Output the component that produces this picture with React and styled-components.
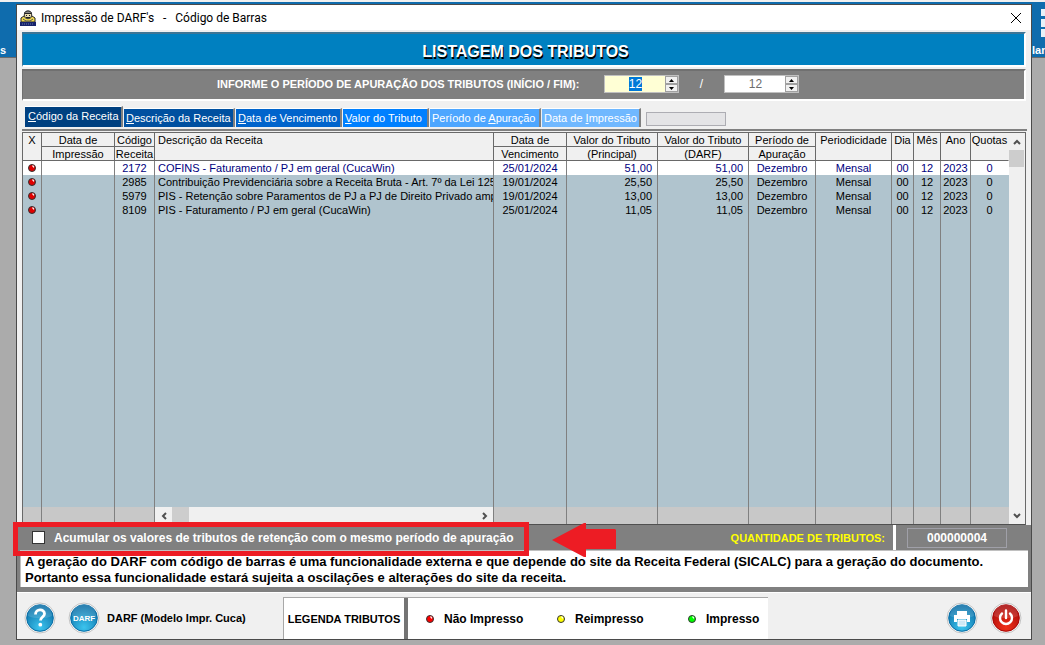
import React, { useEffect, useRef, useState } from 'react';
import styled, { createGlobalStyle } from 'styled-components';

const colors = {
	face: '#f0f0f0',
	shade: '#808080',
	grid: '#b0c4ce',
	line: '#696969',
	banner: '#0080c0',
	app: '#0f6cad',
	red: '#ed1c24',
};

const sans = '"Liberation Sans", Arial, sans-serif';

const GlobalStyle = createGlobalStyle`
	* {
		box-sizing: border-box;
	}
	body {
		margin: 0;
		background: #ababab;
		font: 11px ${sans};
		color: #000;
	}
	button, input {
		font: inherit;
		color: inherit;
		padding: 0;
		margin: 0;
		border: 0;
		border-radius: 0;
		background: none;
	}
`;

const Desktop = styled.div`
	position: relative;
	display: flex;
	min-height: 100vh;
	padding: 4px 13px 5px 16px;
	overflow: hidden;
`;

const AppBar = styled.div`
	position: absolute;
	top: 0;
	left: 0;
	right: 0;
	height: 58px;
	display: flex;
	justify-content: space-between;
	align-items: flex-end;
	border-top: 2px solid ${colors.face};
	border-bottom: 1px solid #6b6b6b;
	background: ${colors.app};
	color: #fff;
	font-weight: bold;
`;

const AppItem = styled.div`
	display: flex;
	flex-direction: column;
	width: 13px;
	line-height: 13px;

	svg {
		display: block;
		align-self: flex-end;
		margin-bottom: 7px;
	}
`;

const Window = styled.main`
	position: relative;
	flex: 1;
	min-width: 0;
	display: flex;
	flex-direction: column;
	border: 1px solid #4a4a4a;
	background: ${colors.face};
`;

const TitleBar = styled.header`
	display: flex;
	align-items: center;
	gap: 5px;
	height: 25px;
	padding: 0 9px 0 3px;
	background: #fff;
	font: 12px Roboto, 'Open Sans', sans-serif;
`;

const Title = styled.span`
	flex: 1;
	white-space: pre;
`;

const CloseButton = styled.button`
	display: flex;
`;

const Banner = styled.h1`
	margin: 2px 5px 0;
	height: 35px;
	padding-left: 4px;
	line-height: 35px;
	border: 2px solid #fff;
	border-top: 2px solid #3d7595;
	border-left: 1px solid #3d7595;
	background: ${colors.banner};
	color: #fff;
	font-size: 16px;
	font-weight: bold;
	text-align: center;
	text-shadow: 1px 2px 0 #000;
`;

const PeriodBar = styled.div`
	display: flex;
	align-items: center;
	margin: 2px 5px 0;
	height: 32px;
	padding: 0 0 2px 194px;
	border: 2px solid #fff;
	border-top: 2px solid #707070;
	border-left: 1px solid #707070;
	background: ${colors.shade};
	color: #fff;
	font-size: 12px;
`;

const PeriodLabel = styled.span`
	width: 387px;
	font-size: 11px;
	font-weight: bold;
	white-space: nowrap;
`;

const Slash = styled.span`
	width: 45px;
	text-align: center;
`;

const SpinBox = styled.span`
	display: flex;
	width: 75px;
	height: 18px;
	border: 1px solid #c0c0c0;
	background: ${props => (props.$active ? '#ffffd5' : '#fff')};
	color: ${props => (props.$active ? '#000' : '#6d6d6d')};

	input {
		flex: 1;
		min-width: 0;
		padding-left: 1px;
		text-align: center;
		outline: none;
	}
	input::selection {
		background: #0078d7;
		color: #fff;
	}
`;

const Spinner = styled.span`
	display: flex;
	flex-direction: column;
	width: 13px;

	button {
		flex: 1;
		display: flex;
		align-items: center;
		justify-content: center;
		border: 1px solid #a0a0a0;
		background: ${colors.face};
	}
`;

const Tabs = styled.div`
	display: flex;
	align-items: flex-end;
	gap: 2px;
	height: 30px;
	margin: 0 4px 0 5px;
	padding: 0 0 2px 3px;
	border-bottom: 2px solid ${colors.shade};
`;

const Tab = styled.button`
	width: ${props => props.$width}px;
	height: ${props => (props.$selected ? 21 : 19)}px;
	margin-left: ${props => (props.$selected ? 0 : -1)}px;
	padding: 0 0 ${props => (props.$selected ? 2 : 0)}px ${props => (props.$selected ? 3 : 2)}px;
	border-top: 1px solid #fff;
	border-right: 2px solid ${colors.shade};
	background: ${props => props.$shade};
	color: #fff;
	white-space: nowrap;
	text-align: left;
`;

const SearchInput = styled.input`
	width: 80px;
	height: 14px;
	margin-left: 3px;
	margin-bottom: 1px;
	border: 1px solid #adadb3;
	background: #e4e4e6;
`;

const GridFrame = styled.div`
	flex: 1;
	display: flex;
	margin: 1px 5px 0;
	border: 1px solid ${colors.line};
	border-bottom-color: #505050;
`;

const Table = styled.table`
	flex: 1;
	width: 100%;
	min-width: 0;
	table-layout: fixed;
	border-spacing: 0;
	background: ${colors.grid};
	line-height: 14px;
`;

const HeadCell = styled.th`
	height: 28px;
	padding: 0;
	vertical-align: top;
	border-right: 1px solid ${props => (props.$last ? colors.face : colors.line)};
	border-bottom: 1px solid ${colors.line};
	background: ${colors.face};
	font-weight: normal;
	text-align: ${props => props.$align || 'center'};
	white-space: nowrap;

	span {
		display: block;
		height: 13px;
		line-height: 14px;
		padding: 0 ${props => (props.$align ? 3 : 0)}px;
	}
	span + span {
		height: 14px;
		border-top: 1px solid ${colors.line};
	}
`;

const Row = styled.tr`
	height: 14px;
	background: ${props => (props.$selected ? '#fff' : 'transparent')};
	color: ${props => (props.$selected ? '#000080' : '#000')};
`;

const Cell = styled.td`
	padding: 0 ${props => (props.$align === 'right' ? 5 : 0)}px 0 ${props => (props.$align === 'left' ? 3 : 0)}px;
	border-right: 1px solid ${props => (props.$last ? 'transparent' : colors.shade)};
	text-align: ${props => props.$align || 'center'};
	white-space: nowrap;
	overflow: hidden;

	svg {
		display: block;
		margin: 0 auto;
	}
`;

const FootRow = styled.tr`
	height: 17px;
	background: #c8c8c8;
`;

const ScrollBar = styled.div`
	display: flex;
	flex-direction: ${props => (props.$vertical ? 'column' : 'row')};
	flex-shrink: 0;
	width: ${props => (props.$vertical ? '16px' : 'auto')};
	height: ${props => (props.$vertical ? 'auto' : '17px')};
	background: ${colors.face};

	button {
		display: flex;
		align-items: center;
		justify-content: center;
		width: ${props => (props.$vertical ? 15 : 17)}px;
		height: 17px;
	}
	button:last-child {
		margin-left: ${props => (props.$vertical ? '0' : 'auto')};
		margin-top: ${props => (props.$vertical ? 'auto' : '0')};
	}
`;

const Thumb = styled.span`
	width: ${props => (props.$vertical ? 15 : 17)}px;
	height: 17px;
	background: #cdcdcd;
`;

const SummaryBar = styled.div`
	position: relative;
	display: flex;
	align-items: center;
	height: 25px;
	padding: 0 24px 0 15px;
	background: ${colors.shade};
	color: #fff;
	font-weight: bold;
`;

const CheckLabel = styled.label`
	display: flex;
	align-items: center;
	gap: 9px;
	flex: 1;
	white-space: nowrap;
	font-size: 12px;

	input {
		appearance: none;
		width: 13px;
		height: 13px;
		border: 1px solid #333;
		background: #fff;
	}
	input:checked {
		background: #333;
	}
`;

const CountLabel = styled.span`
	padding-right: 8px;
	color: #ffff00;
`;

const CountBox = styled.div`
	align-self: stretch;
	display: flex;
	align-items: center;
	padding-left: 11px;
	border-left: 3px solid #fff;
`;

const Count = styled.output`
	width: 100px;
	height: 20px;
	line-height: 18px;
	border: 1px solid #a0a0a8;
	text-align: center;
	font-size: 12px;
`;

const Highlight = styled.div`
	position: absolute;
	z-index: 1;
	left: -4px;
	top: -3px;
	width: 516px;
	height: 34px;
	border: 5px solid ${colors.red};
	pointer-events: none;
`;

const Arrow = styled.svg`
	position: absolute;
	z-index: 1;
	left: 535px;
	top: -3px;
`;

const Notice = styled.p`
	margin: 0;
	height: 42px;
	padding: 4px 0 0 5px;
	border: solid ${colors.shade};
	border-width: 0 3px 5px 3px;
	background: #fff;
	box-shadow: inset 1px 1px 0 #c0c0c0;
	font-size: 13px;
	font-weight: bold;
	line-height: 16px;
	white-space: nowrap;
	overflow: hidden;
`;

const Footer = styled.footer`
	display: flex;
	align-items: center;
	height: 47px;
	padding: 4px 9px 0 7px;
	border-top: 1px solid #fff;
	font-weight: bold;
`;

const RoundButton = styled.button`
	display: flex;
	width: 32px;
	height: 32px;
	margin-right: ${props => props.$gap || 0}px;
`;

const ModelLabel = styled.span`
	width: 176px;
	white-space: nowrap;
`;

const Legend = styled.div`
	display: flex;
	align-items: center;
	align-self: stretch;
	width: 485px;
	margin-right: auto;
	border-top: 1px solid #a8a8a8;
	border-left: 1px solid #a8a8a8;
	background: #fff;
`;

const LegendTitle = styled.span`
	align-self: stretch;
	flex-shrink: 0;
	display: flex;
	align-items: center;
	justify-content: center;
	width: 124px;
	border-right: 4px solid #747474;
	white-space: nowrap;
`;

const LegendItem = styled.span`
	flex: 0 0 131px;
	display: flex;
	align-items: center;
	gap: 10px;
	padding-left: 18px;
	white-space: nowrap;
	font-size: 12px;

	&:last-child {
		flex-basis: auto;
	}
`;

const columns = [
	{ key: 'mark', head: ['X'], width: 19 },
	{ key: 'printed', head: ['Data de', 'Impressão'], width: 73 },
	{ key: 'code', head: ['Código', 'Receita'], width: 40 },
	{ key: 'description', head: ['Descrição da Receita'], align: 'left' },
	{ key: 'due', head: ['Data de', 'Vencimento'], width: 73 },
	{ key: 'value', head: ['Valor do Tributo', '(Principal)'], width: 91, cellAlign: 'right' },
	{ key: 'darf', head: ['Valor do Tributo', '(DARF)'], width: 91, cellAlign: 'right' },
	{ key: 'period', head: ['Período de', 'Apuração'], width: 67 },
	{ key: 'frequency', head: ['Periodicidade'], width: 76 },
	{ key: 'day', head: ['Dia'], width: 22 },
	{ key: 'month', head: ['Mês'], width: 27 },
	{ key: 'year', head: ['Ano'], width: 30 },
	{ key: 'quotas', head: ['Quotas'], width: 38 },
];

const common = { period: 'Dezembro', frequency: 'Mensal', day: '00', month: '12', year: '2023', quotas: '0' };

const taxes = [
	{ ...common, code: '2172', description: 'COFINS - Faturamento / PJ em geral (CucaWin)', due: '25/01/2024', value: '51,00', darf: '51,00' },
	{ ...common, code: '2985', description: 'Contribuição Previdenciária sobre a Receita Bruta - Art. 7º da Lei 1254', due: '19/01/2024', value: '25,50', darf: '25,50' },
	{ ...common, code: '5979', description: 'PIS - Retenção sobre Paramentos de PJ a PJ de Direito Privado ampara', due: '19/01/2024', value: '13,00', darf: '13,00' },
	{ ...common, code: '8109', description: 'PIS - Faturamento / PJ em geral (CucaWin)', due: '25/01/2024', value: '11,05', darf: '11,05' },
];

const tabs = [
	{ text: ['', 'C', 'ódigo da Receita'], width: 98, shade: '#004080' },
	{ text: ['', 'D', 'escrição da Receita'], width: 111, shade: '#0050a0' },
	{ text: ['', 'D', 'ata de Vencimento'], width: 106, shade: '#0064cc' },
	{ text: ['', 'V', 'alor do Tributo'], width: 86, shade: '#0080ff' },
	{ text: ['Período de ', 'A', 'puração'], width: 111, shade: '#4da6ff' },
	{ text: ['Data de ', 'I', 'mpressão'], width: 99, shade: '#70b8ff' },
];

const chevrons = {
	left: 'M6 1 3 4l3 3',
	right: 'M2 1l3 3-3 3',
	up: 'M1 6l3-3 3 3',
	down: 'M1 2l3 3 3-3',
};

const Chevron = ({ dir }) => (
	<svg width="8" height="8" viewBox="0 0 8 8">
		<path d={chevrons[dir]} fill="none" stroke="#505050" strokeWidth="2" />
	</svg>
);

const Dot = ({ color }) => (
	<svg width="8" height="8" viewBox="0 0 8 8">
		<circle cx="4" cy="4" r="3.5" fill={color} stroke="#333" strokeWidth="1" />
		<path d="M4 2h1.6v1.6" fill="none" stroke="#fff" strokeWidth="1" />
	</svg>
);

const AppIcon = () => (
	<svg width="16" height="16" viewBox="0 0 16 16">
		<path d="M1 8 4 6h8l3 2v4H1z" fill="#f2dc4e" stroke="#222" strokeWidth="1" />
		<circle cx="8" cy="5" r="3.8" fill="#e9dcae" stroke="#333" strokeWidth="1" />
		<path d="M4.5 3.5C5 0 11 0 11.5 3.5z" fill="#8a8a8a" stroke="#222" />
		<path d="M6 5.5h1M9 5.5h1M6 7.5h4" stroke="#222" />
		<path d="M3 9l3 2h4l3-2" fill="none" stroke="#555" />
		<path d="M0 12h16v4H0z" fill="#17236b" />
		<path d="M2 14h12" stroke="#6b78a8" strokeDasharray="1 1" />
	</svg>
);

const Orb = ({ id, light, dark, children }) => (
	<svg width="32" height="32" viewBox="0 0 32 32">
		<defs>
			<radialGradient id={id} cx="50%" cy="85%" r="80%">
				<stop offset="0" stopColor={light} />
				<stop offset="1" stopColor={dark} />
			</radialGradient>
		</defs>
		<circle cx="16" cy="16" r="15" fill="#f8f8f8" stroke="#c4c4c4" />
		<circle cx="16" cy="16" r="13.3" fill={`url(#${id})`} stroke={dark} />
		<path d="M4 14a12 12 0 0 1 24 0c-6 3-18 3-24 0z" fill="#fff" opacity=".14" />
		{children}
	</svg>
);

const PeriodSpin = React.forwardRef(({ label, active }, ref) => (
	<SpinBox $active={active}>
		<input ref={ref} aria-label={label} defaultValue="12" inputMode="numeric" />
		<Spinner>
			<button aria-label={`${label}: aumentar`}>
				<svg width="5" height="3"><path d="M0 3h5L2.5 0z" /></svg>
			</button>
			<button aria-label={`${label}: diminuir`}>
				<svg width="5" height="3"><path d="M0 0h5L2.5 3z" /></svg>
			</button>
		</Spinner>
	</SpinBox>
));

const TaxTable = () => (
	<GridFrame>
		<Table>
			<colgroup>
				{columns.map(col => (
					<col key={col.key} width={col.width} />
				))}
			</colgroup>
			<thead>
				<tr>
					{columns.map(col => (
						<HeadCell key={col.key} $align={col.align} $last={col.key === 'quotas'}>
							{col.head.map(line => (
								<span key={line}>{line}</span>
							))}
						</HeadCell>
					))}
				</tr>
			</thead>
			<tbody>
				{taxes.map((tax, i) => (
					<Row key={tax.code} $selected={i === 0}>
						{columns.map(col => (
							<Cell
								key={col.key}
								$align={col.cellAlign || col.align}
								$last={col.key === 'quotas'}
							>
								{col.key === 'mark' ? <Dot color="#e00000" /> : tax[col.key]}
							</Cell>
						))}
					</Row>
				))}
				<tr>
					{columns.map(col => (
						<Cell key={col.key} $last={col.key === 'quotas'} />
					))}
				</tr>
			</tbody>
			<tfoot>
				<FootRow>
					{columns.map(col => (
						<Cell key={col.key} $last={col.key === 'quotas'}>
							{col.key === 'description' && (
								<ScrollBar>
									<button aria-label="Rolar para a esquerda"><Chevron dir="left" /></button>
									<Thumb />
									<button aria-label="Rolar para a direita"><Chevron dir="right" /></button>
								</ScrollBar>
							)}
						</Cell>
					))}
				</FootRow>
			</tfoot>
		</Table>
		<ScrollBar $vertical>
			<button aria-label="Rolar para cima"><Chevron dir="up" /></button>
			<Thumb $vertical />
			<button aria-label="Rolar para baixo"><Chevron dir="down" /></button>
		</ScrollBar>
	</GridFrame>
);

const App = () => {
	const start = useRef(null);
	const [tab, setTab] = useState(0);

	useEffect(() => {
		start.current.focus();
		start.current.select();
	}, []);

	return (
		<Desktop>
			<GlobalStyle />
			<AppBar>
				<AppItem>
					<span>s</span>
				</AppItem>
				<AppItem>
					<svg width="4" height="28" viewBox="0 0 4 28">
						<path d="M0 0h4v7H0zM0 10h4v8H0zM0 20h4v8H0z" fill="#e8f1f8" />
					</svg>
					<span>lan</span>
				</AppItem>
			</AppBar>
			<Window>
				<TitleBar>
					<AppIcon />
					<Title>{"Impressão de DARF's   -   Código de Barras"}</Title>
					<CloseButton aria-label="Fechar">
						<svg width="12" height="12" viewBox="0 0 12 12">
							<path d="M1 1l10 10M11 1 1 11" stroke="#000" />
						</svg>
					</CloseButton>
				</TitleBar>
				<Banner>LISTAGEM DOS TRIBUTOS</Banner>
				<PeriodBar>
					<PeriodLabel>INFORME O PERÍODO DE APURAÇÃO DOS TRIBUTOS (INÍCIO / FIM):</PeriodLabel>
					<PeriodSpin ref={start} label="Início" active />
					<Slash>/</Slash>
					<PeriodSpin label="Fim" />
				</PeriodBar>
				<Tabs role="tablist">
					{tabs.map((item, i) => (
						<Tab
							key={item.shade}
							role="tab"
							aria-selected={tab === i}
							$selected={tab === i}
							$width={item.width}
							$shade={item.shade}
							onClick={() => setTab(i)}
						>
							{item.text[0]}
							<u>{item.text[1]}</u>
							{item.text[2]}
						</Tab>
					))}
					<SearchInput aria-label="Pesquisar" disabled />
				</Tabs>
				<TaxTable />
				<SummaryBar>
					<CheckLabel>
						<input type="checkbox" />
						Acumular os valores de tributos de retenção com o mesmo período de apuração
					</CheckLabel>
					<CountLabel>QUANTIDADE DE TRIBUTOS:</CountLabel>
					<CountBox>
						<Count>000000004</Count>
					</CountBox>
					<Highlight />
					<Arrow width="65" height="36" viewBox="0 0 65 36">
						<path d="M0 18 32 1h2v6h29l1 1v19H34v8h-2z" fill={colors.red} />
					</Arrow>
				</SummaryBar>
				<Notice>
					A geração do DARF com código de barras é uma funcionalidade externa e que depende do site da Receita Federal (SICALC) para a geração do documento.
					<br />
					Portanto essa funcionalidade estará sujeita a oscilações e alterações do site da receita.
				</Notice>
				<Footer>
					<RoundButton $gap={12} aria-label="Ajuda">
						<Orb id="help" light="#3cc4ee" dark="#0a6ea6">
							<path
								d="M11.5 12.5c0-6 9-6 9-.8 0 3.3-4 3.4-4 6.8"
								fill="none"
								stroke="#fff"
								strokeWidth="2.8"
							/>
							<circle cx="16.3" cy="22.7" r="1.9" fill="#fff" />
						</Orb>
					</RoundButton>
					<RoundButton $gap={7} aria-label="DARF">
						<Orb id="darf" light="#3cc4ee" dark="#0a6ea6">
							<text x="16" y="19" textAnchor="middle" fill="#fff" fontSize="8" fontWeight="bold">
								DARF
							</text>
						</Orb>
					</RoundButton>
					<ModelLabel>DARF (Modelo Impr. Cuca)</ModelLabel>
					<Legend>
						<LegendTitle>LEGENDA TRIBUTOS</LegendTitle>
						<LegendItem><Dot color="#ff0000" />Não Impresso</LegendItem>
						<LegendItem><Dot color="#ffff00" />Reimpresso</LegendItem>
						<LegendItem><Dot color="#00ff00" />Impresso</LegendItem>
					</Legend>
					<RoundButton $gap={12} aria-label="Imprimir">
						<Orb id="print" light="#3cc4ee" dark="#0a6ea6">
							<path d="M11 9h10v4H11zM8 13h16v7h-3v-3H11v3H8z" fill="#fff" />
							<path d="M12 18h8v6h-8z" fill="#cfe9f5" stroke="#fff" />
						</Orb>
					</RoundButton>
					<RoundButton aria-label="Sair">
						<Orb id="power" light="#f03018" dark="#a80808">
							<path
								d="M12 11.5a6 6 0 1 0 8 0M16 8.5v7.5"
								fill="none"
								stroke="#fff"
								strokeWidth="2.4"
								strokeLinecap="round"
							/>
						</Orb>
					</RoundButton>
				</Footer>
			</Window>
		</Desktop>
	);
};

export default App;
